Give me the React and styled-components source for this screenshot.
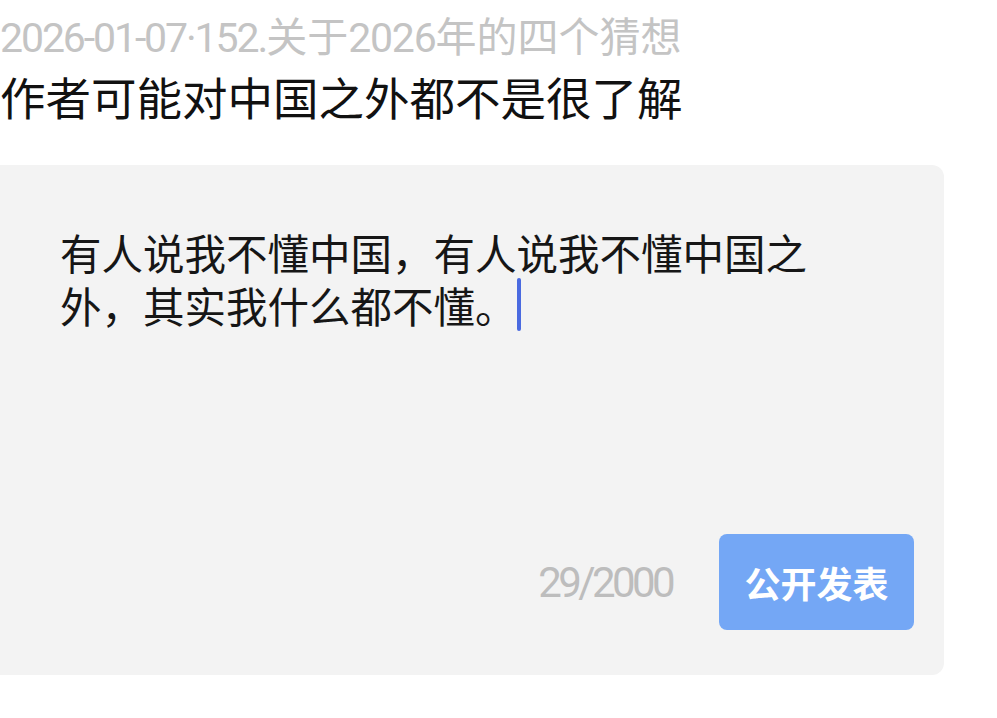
import styled, { createGlobalStyle } from "styled-components";

const GlobalStyle = createGlobalStyle`
  body {
    margin: 0;
    background: #ffffff;
    font-family: Roboto, "Noto Sans CJK SC", sans-serif;
  }
`;

const Page = styled.div`
  width: 997px;
  height: 718px;
  display: flex;
  flex-direction: column;
  overflow: hidden;
`;

const Source = styled.div`
  margin-top: 14px;
  font-size: 41px;
  line-height: 48px;
  color: #c4c4c4;
  white-space: nowrap;
`;

// latin runs in the screenshot are narrower than plain Roboto
const Narrow = styled.span`
  letter-spacing: ${(p) => p.$spacing || "-2.1px"};
`;

const Comment = styled.div`
  margin-top: 11px;
  font-size: 45.5px;
  line-height: 56px;
  color: #111111;
  white-space: nowrap;
`;

const Card = styled.div`
  margin-top: 36px;
  width: 944px;
  height: 510px;
  background: #f3f3f3;
  border-radius: 0 12px 12px 0;
  box-sizing: border-box;
  padding: 64px 30px 45px 60px;
  display: flex;
  flex-direction: column;
  justify-content: space-between;
`;

const Body = styled.div`
  width: 766px;
  font-size: 41.5px;
  line-height: 53px;
  color: #161616;
`;

const Caret = styled.span`
  display: inline-block;
  width: 4px;
  height: 53px;
  margin-top: -4px;
  vertical-align: top;
  border-radius: 2px;
  background: #4a6ae0;
`;

const Footer = styled.div`
  display: flex;
  align-items: center;
  justify-content: flex-end;
  gap: 47px;
`;

const Counter = styled.span`
  font-size: 42px;
  color: #bdbdbd;
  letter-spacing: -3.6px;
`;

const Submit = styled.button`
  width: 195px;
  height: 96px;
  padding: 0;
  border: none;
  border-radius: 8px;
  background: #74a7f5;
  color: #ffffff;
  font-family: "Noto Sans CJK SC", sans-serif;
  font-size: 36px;
  font-weight: 700;
`;

export default function App() {
  return (
    <Page>
      <GlobalStyle />
      <Source>
        <Narrow>2026-01-07·152.</Narrow>关于<Narrow $spacing="-1.2px">2026</Narrow>年的四个猜想
      </Source>
      <Comment>作者可能对中国之外都不是很了解</Comment>
      <Card>
        <Body>
          有人说我不懂中国，有人说我不懂中国之外，其实我什么都不懂。
          <Caret />
        </Body>
        <Footer>
          <Counter>29/2000</Counter>
          <Submit>公开发表</Submit>
        </Footer>
      </Card>
    </Page>
  );
}
